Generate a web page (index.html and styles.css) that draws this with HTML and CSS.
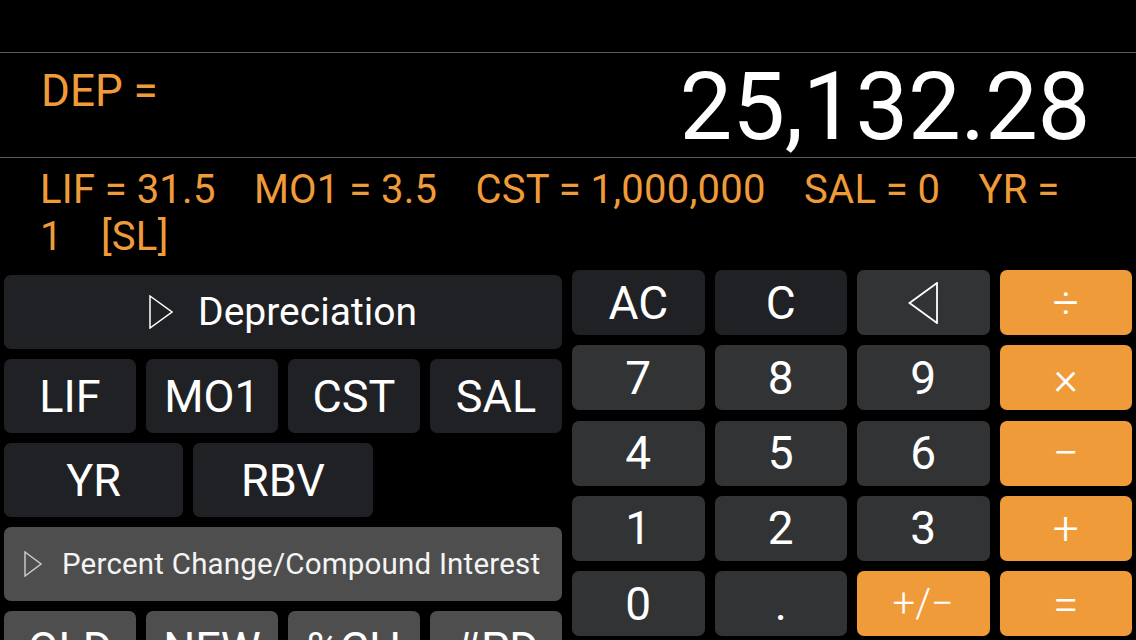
FILE: index.html
```html
<!DOCTYPE html>
<html lang="en">
<head>
  <meta charset="UTF-8">
  <title>Business Calculator</title>
  <link rel="stylesheet" href="styles.css">
</head>
<body>

  <div class="status-bar"></div>

  <div class="display">
    <div class="display-label">DEP =</div>
    <div class="display-value">25,132.28</div>
  </div>

  <p class="registers">LIF = 31.5&nbsp;&nbsp;&nbsp; MO1 = 3.5&nbsp;&nbsp;&nbsp; CST = 1,000,000&nbsp;&nbsp;&nbsp; SAL = 0&nbsp;&nbsp;&nbsp; YR = 1&nbsp;&nbsp;&nbsp; [SL]</p>

  <main class="pad">
    <section class="functions">
      <button class="fn-head">
        <svg class="disclosure" viewBox="0 0 24 34"><path d="M1 1L23 17L1 33Z"/></svg>
        <span>Depreciation</span>
      </button>
      <div class="fn-row four">
        <button class="fn">LIF</button>
        <button class="fn">MO1</button>
        <button class="fn">CST</button>
        <button class="fn">SAL</button>
      </div>
      <div class="fn-row three">
        <button class="fn">YR</button>
        <button class="fn">RBV</button>
      </div>
      <button class="fn-head alt">
        <svg class="disclosure small" viewBox="0 0 18 26"><path d="M1 1L17 13L1 25Z"/></svg>
        <span>Percent Change/Compound Interest</span>
      </button>
      <div class="fn-row four alt">
        <button class="fn">OLD</button>
        <button class="fn">NEW</button>
        <button class="fn">%CH</button>
        <button class="fn">#PD</button>
      </div>
    </section>

    <section class="keypad">
      <button class="key dark">AC</button>
      <button class="key dark">C</button>
      <button class="key">
        <svg class="back-icon" viewBox="0 0 30 42"><path d="M29 1L1.5 21L29 41Z"/></svg>
      </button>
      <button class="key op">÷</button>

      <button class="key">7</button>
      <button class="key">8</button>
      <button class="key">9</button>
      <button class="key op">×</button>

      <button class="key">4</button>
      <button class="key">5</button>
      <button class="key">6</button>
      <button class="key op">−</button>

      <button class="key">1</button>
      <button class="key">2</button>
      <button class="key">3</button>
      <button class="key op">+</button>

      <button class="key">0</button>
      <button class="key">.</button>
      <button class="key op sign">+/−</button>
      <button class="key op">=</button>
    </section>
  </main>

</body>
</html>
```

FILE: styles.css
```css
* { box-sizing: border-box; }

html, body {
  margin: 0;
  height: 640px;
  overflow: hidden;
  background: #000;
}
body {
  font-family: Roboto, "Liberation Sans", sans-serif;
  color: #fff;
}

button {
  border: none; padding: 0; margin: 0;
  font: inherit; color: inherit;
  cursor: pointer;
}

.status-bar { height: 53px; border-bottom: 1px solid #5a5a5a; }

.display {
  height: 105px;
  border-bottom: 1px solid #5a5a5a;
  display: flex; justify-content: space-between; align-items: flex-start;
  padding: 7px 46px 0 41px;
}
.display-label {
  margin-top: 9px;
  font-size: 44px; line-height: 44px;
  color: #f09b3a;
}
.display-value {
  font-size: 94px; line-height: 94px;
  letter-spacing: -0.3px;
}

.registers {
  margin: 0;
  height: 102px;
  padding: 8px 42px 0 40px;
  font-size: 40px; line-height: 47px;
  letter-spacing: 0.25px;
  word-spacing: -0.6px;
  color: #f09b3a;
}

.pad { display: flex; gap: 10px; padding: 0 4px; }

/* left: function panels */
.functions {
  flex: 0 0 558px;
  padding-top: 15px;
  display: flex; flex-direction: column; gap: 10px;
}
.fn-head {
  height: 74px;
  display: flex; align-items: center; justify-content: center; gap: 25px;
  background: #202124;
  border-radius: 7px;
  font-size: 39px;
}
.fn-head.alt {
  justify-content: flex-start;
  padding-left: 20px; gap: 20px;
  background: #4e4e4e;
  font-size: 29.5px;
  letter-spacing: 0.2px;
  color: #f4f4f4;
}
.disclosure {
  width: 24px; height: 34px;
  fill: none; stroke: #fff; stroke-width: 1.5;
}
.disclosure.small { width: 18px; height: 26px; stroke: #c8c8c8; }

.fn-row { display: grid; gap: 10px; }
.fn-row.four { grid-template-columns: repeat(4, 1fr); }
.fn-row.three { grid-template-columns: repeat(3, 1fr); }
.fn {
  height: 74px;
  background: #202124;
  border-radius: 7px;
  font-size: 45px;
}
.fn-row.alt .fn { background: #4e4e4e; }

/* right: keypad */
.keypad {
  flex: 0 0 560px;
  padding-top: 10px;
  display: grid;
  grid-template-columns: repeat(4, 1fr);
  grid-auto-rows: 65px;
  gap: 10.3px 10px;
}
.key {
  display: flex; align-items: center; justify-content: center;
  background: #323335;
  border-radius: 7px;
  font-size: 46px;
}
.key.dark { background: #202124; }
.key.op { background: #f09b3a; font-size: 46px; font-weight: 300; }
.key.sign { font-size: 40px; }

.back-icon {
  width: 30px; height: 42px;
  fill: none; stroke: #fff; stroke-width: 1.8;
}
```
